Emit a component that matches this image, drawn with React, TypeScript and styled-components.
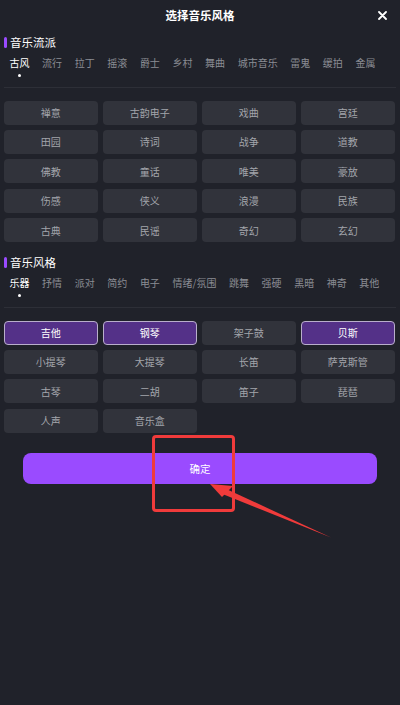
import React from "react";
import styled, { createGlobalStyle } from "styled-components";

const Global = createGlobalStyle`
  html, body { margin: 0; padding: 0; background: #20222a; }
  body { font-family: "Noto Sans CJK SC", "Noto Sans", sans-serif; }
  * { box-sizing: border-box; }
`;

const Page = styled.div`
  position: relative;
  width: 400px;
  height: 705px;
  background: #20222a;
  overflow: hidden;
`;

const Header = styled.div`
  height: 30px;
  display: flex;
  align-items: center;
  justify-content: center;
  position: relative;
`;

const Title = styled.div`
  color: #ffffff;
  font-size: 11.5px;
  font-weight: 700;
  line-height: 14px;
`;

const Close = styled.button`
  position: absolute;
  right: 12px;
  top: 10px;
  width: 11px;
  height: 11px;
  padding: 0;
  border: 0;
  background: transparent;
  display: flex;
  align-items: center;
  justify-content: center;
`;

const Section = styled.div`
  padding: 0 4px;
  display: flex;
  flex-direction: column;
`;

const SectionTitle = styled.div<{ $top: number }>`
  margin-top: ${(p) => p.$top}px;
  display: flex;
  align-items: center;
  height: 14px;
  color: #ffffff;
  font-size: 11.5px;
  line-height: 14px;
  &::before {
    content: "";
    width: 3px;
    height: 11px;
    border-radius: 1.5px;
    background: #9a4bff;
    margin-right: 3px;
  }
`;

const Tabs = styled.div`
  margin-top: 6px;
  display: flex;
  gap: 12.6px;
  padding-left: 5.5px;
`;

const Tab = styled.div`
  display: flex;
  flex-direction: column;
  align-items: center;
`;

const TabLabel = styled.span<{ $active?: boolean }>`
  font-size: 10px;
  line-height: 16px;
  color: ${(p) => (p.$active ? "#ffffff" : "#8b8d94")};
  white-space: nowrap;
`;

const Dot = styled.span<{ $active?: boolean }>`
  margin-top: 2.5px;
  width: 3.5px;
  height: 3.5px;
  border-radius: 50%;
  background: ${(p) => (p.$active ? "#ffffff" : "transparent")};
`;

const Divider = styled.div`
  margin-top: 10px;
  height: 1px;
  background: #2d2f37;
`;

const Grid = styled.div`
  margin-top: 12.5px;
  display: grid;
  grid-template-columns: repeat(4, 93.5px);
  column-gap: 5.5px;
  row-gap: 5.4px;
`;

const Cell = styled.div<{ $selected?: boolean }>`
  height: 24px;
  border-radius: 4px;
  display: flex;
  align-items: center;
  justify-content: center;
  font-size: 10px;
  color: ${(p) => (p.$selected ? "#ffffff" : "#a3a5ab")};
  background: ${(p) => (p.$selected ? "#543188" : "#31333b")};
  border: ${(p) => (p.$selected ? "1px solid #b9aecb" : "1px solid transparent")};
`;

const Confirm = styled.button`
  margin: 20px 23px 0;
  height: 31px;
  width: 354px;
  border: 0;
  border-radius: 8px;
  background: #9a4bff;
  color: #ffffff;
  font-family: "Noto Sans CJK SC", "Noto Sans", sans-serif;
  font-size: 10.5px;
  display: flex;
  align-items: center;
  justify-content: center;
`;

const HighlightBox = styled.div`
  position: absolute;
  left: 152px;
  top: 435px;
  width: 83px;
  height: 77px;
  border: 3px solid #f03b3b;
  border-radius: 4px;
  pointer-events: none;
`;

const ArrowLayer = styled.svg`
  position: absolute;
  left: 0;
  top: 0;
  pointer-events: none;
`;

const genreTabs = ["古风", "流行", "拉丁", "摇滚", "爵士", "乡村", "舞曲", "城市音乐", "雷鬼", "缓拍", "金属"];
const genres = [
  "禅意", "古韵电子", "戏曲", "宫廷",
  "田园", "诗词", "战争", "道教",
  "佛教", "童话", "唯美", "豪放",
  "伤感", "侠义", "浪漫", "民族",
  "古典", "民谣", "奇幻", "玄幻",
];
const styleTabs = ["乐器", "抒情", "派对", "简约", "电子", "情绪/氛围", "跳舞", "强硬", "黑暗", "神奇", "其他"];
const instruments = [
  "吉他", "钢琴", "架子鼓", "贝斯",
  "小提琴", "大提琴", "长笛", "萨克斯管",
  "古琴", "二胡", "笛子", "琵琶",
  "人声", "音乐盒",
];
const selected = new Set(["吉他", "钢琴", "贝斯"]);

const TabRow = ({ items }: { items: string[] }) => (
  <Tabs>
    {items.map((t, i) => (
      <Tab key={t}>
        <TabLabel $active={i === 0}>{t}</TabLabel>
        <Dot $active={i === 0} />
      </Tab>
    ))}
  </Tabs>
);

export default function App() {
  return (
    <Page>
      <Global />
      <Header>
        <Title>选择音乐风格</Title>
        <Close aria-label="close">
          <svg width="9" height="9" viewBox="0 0 9 9">
            <path d="M1 1 L8 8 M8 1 L1 8" stroke="#ffffff" strokeWidth="1.8" strokeLinecap="round" />
          </svg>
        </Close>
      </Header>
      <Section>
        <SectionTitle $top={5}>音乐流派</SectionTitle>
        <TabRow items={genreTabs} />
        <Divider />
        <Grid>
          {genres.map((g) => (
            <Cell key={g}>{g}</Cell>
          ))}
        </Grid>
        <SectionTitle $top={13}>音乐风格</SectionTitle>
        <TabRow items={styleTabs} />
        <Divider />
        <Grid>
          {instruments.map((g) => (
            <Cell key={g} $selected={selected.has(g)}>
              {g}
            </Cell>
          ))}
        </Grid>
      </Section>
      <Confirm>确定</Confirm>
      <HighlightBox />
      <ArrowLayer width="400" height="705" viewBox="0 0 400 705">
        <polygon points="210,484 233,486 222,497" fill="#f03b3b" />
        <polygon points="223,487.5 331,537.5 220,493" fill="#f03b3b" />
      </ArrowLayer>
    </Page>
  );
}
